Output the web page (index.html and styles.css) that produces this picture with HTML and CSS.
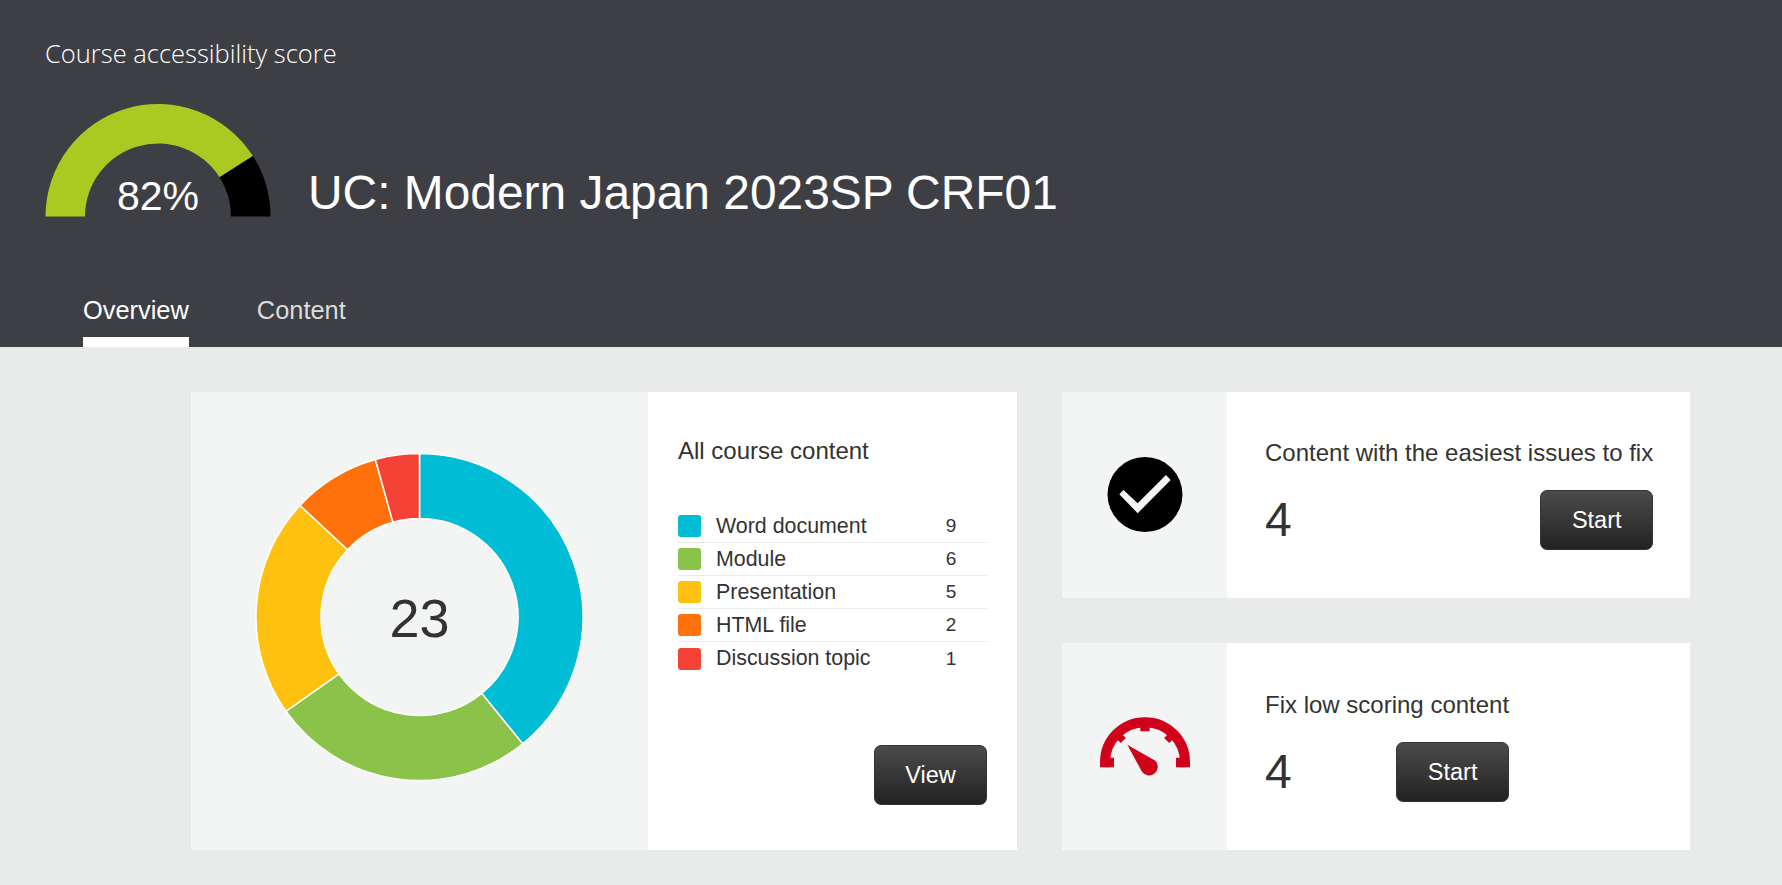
FILE: index.html
```html
<!DOCTYPE html>
<html lang="en">

<head>
    <meta charset="UTF-8">
    <meta name="viewport" content="width=device-width, initial-scale=1.0">
    <title>Course accessibility score</title>
    <link rel="stylesheet" href="styles.css">
</head>

<body>

    <header class="course-header">
        <div class="score-label">Course accessibility score</div>
        <div class="score-row">
            <div class="score-gauge">
                <svg viewBox="0 0 226 114" width="226" height="114">
                    <path fill="#abc921" d="M.5 113.5A112.5 112.5 0 0 1 207.9 53.1L174.6 74.3A73 73 0 0 0 40 113.5Z"/>
                    <path fill="#000" d="M207.9 53.1A112.5 112.5 0 0 1 225.5 113.5H186A73 73 0 0 0 174.6 74.3Z"/>
                </svg>
                <span class="score-value">82%</span>
            </div>
            <h1 class="course-name">UC: Modern Japan 2023SP CRF01</h1>
        </div>
        <nav class="tabs">
            <a class="tab active" href="#">Overview</a>
            <a class="tab" href="#">Content</a>
        </nav>
    </header>

    <main class="dashboard">
        <section class="card content-card">
            <div class="chart-side">
                <svg class="donut" viewBox="-165.5 -165 331 330" width="331" height="330">
                    <path fill="#00bcd4" d="M0 -163.5A163.5 163.5 0 0 1 103.2 126.8L62.2 76.4A98.5 98.5 0 0 0 0 -98.5Z"/>
                    <path fill="#8bc34a" d="M103.2 126.8A163.5 163.5 0 0 1 -133.6 94.3L-80.5 56.8A98.5 98.5 0 0 0 62.2 76.4Z"/>
                    <path fill="#ffc110" d="M-133.6 94.3A163.5 163.5 0 0 1 -119.5 -111.6L-71.9 -67.3A98.5 98.5 0 0 0 -80.5 56.8Z"/>
                    <path fill="#ff710b" d="M-119.5 -111.6A163.5 163.5 0 0 1 -44.1 -157.5L-26.6 -94.8A98.5 98.5 0 0 0 -71.9 -67.3Z"/>
                    <path fill="#f44336" d="M-44.1 -157.5A163.5 163.5 0 0 1 0 -163.5V-98.5A98.5 98.5 0 0 0 -26.6 -94.8Z"/>
                    <text class="donut-total" x="0" y="20" text-anchor="middle">23</text>
                </svg>
            </div>
            <div class="legend-side">
                <h2 class="card-title">All course content</h2>
                <ul class="legend">
                    <li class="legend-row"><span class="swatch swatch-word"></span><span class="legend-name">Word document</span><span class="legend-count">9</span></li>
                    <li class="legend-row"><span class="swatch swatch-module"></span><span class="legend-name">Module</span><span class="legend-count">6</span></li>
                    <li class="legend-row"><span class="swatch swatch-slides"></span><span class="legend-name">Presentation</span><span class="legend-count">5</span></li>
                    <li class="legend-row"><span class="swatch swatch-html"></span><span class="legend-name">HTML file</span><span class="legend-count">2</span></li>
                    <li class="legend-row"><span class="swatch swatch-topic"></span><span class="legend-name">Discussion topic</span><span class="legend-count">1</span></li>
                </ul>
                <button class="btn view-btn" type="button">View</button>
            </div>
        </section>

        <div class="side-column">
            <section class="card task-card">
                <div class="task-icon">
                    <svg viewBox="0 0 130 110" width="130" height="110">
                        <circle cx="65" cy="54.5" r="37.5" fill="#000"/>
                        <path fill="#f3f5f4" d="M39.3 54.3L43.5 50L57.7 63.3L86 35L90.7 40L57.7 73.3Z"/>
                    </svg>
                </div>
                <div class="task-body">
                    <div class="task-inner">
                        <h2 class="card-title">Content with the easiest issues to fix</h2>
                        <div class="task-action">
                            <span class="task-count">4</span>
                            <button class="btn" type="button">Start</button>
                        </div>
                    </div>
                </div>
            </section>

            <section class="card task-card">
                <div class="task-icon">
                    <svg viewBox="0 4.5 390 270" width="130" height="90">
                        <path fill="none" stroke="#d0021b" stroke-width="30" d="M75 200V185A120 120 0 0 1 315 185V200"/>
                        <path fill="none" stroke="#d0021b" stroke-width="28" d="M75 186H102M288 186H315M195 70V92"/>
                        <path fill="none" stroke="#d0021b" stroke-width="22" d="M112 102L130 120M278 102L260 120"/>
                        <path fill="#d0021b" d="M142 133L226 181A26 26 0 1 1 186 214Z"/>
                    </svg>
                </div>
                <div class="task-body">
                    <div class="task-inner">
                        <h2 class="card-title">Fix low scoring content</h2>
                        <div class="task-action">
                            <span class="task-count">4</span>
                            <button class="btn" type="button">Start</button>
                        </div>
                    </div>
                </div>
            </section>
        </div>
    </main>

</body>

</html>
```

FILE: styles.css
```css
* {
    box-sizing: border-box;
}

body {
    margin: 0;
    font-family: "Liberation Sans", Arial, sans-serif;
    color: #333;
    background-color: #e9ebea;
}

.course-header {
    display: flex;
    flex-direction: column;
    height: 347px;
    padding: 37px 0 0 45px;
    background-color: #3e3f44;
    color: white;
}

.score-label {
    font-family: "Open Sans", sans-serif;
    font-weight: 300;
    font-size: 25.5px;
    line-height: 33px;
}

.score-row {
    display: flex;
    align-items: flex-start;
    margin-top: 33px;
}

.score-gauge {
    position: relative;
    width: 226px;
    height: 114px;
}

.score-gauge svg {
    display: block;
}

.score-value {
    position: absolute;
    left: 0;
    right: 0;
    bottom: -3px;
    font-size: 41px;
    line-height: 48px;
    text-align: center;
}

.course-name {
    margin: 60px 0 0 37px;
    font-size: 47.9px;
    font-weight: normal;
    line-height: 60px;
}

.tabs {
    display: flex;
    gap: 68px;
    margin: auto 0 0 38px;
}

.tab {
    height: 50px;
    font-size: 25.4px;
    line-height: 26px;
    color: #dcdcdc;
    text-decoration: none;
}

.tab.active {
    color: white;
    border-bottom: 10px solid white;
}

.dashboard {
    display: flex;
    gap: 45px;
    padding: 45px 92px 35px 191px;
}

.card {
    display: flex;
    background-color: white;
}

.content-card {
    width: 826px;
    height: 458px;
}

.chart-side {
    display: flex;
    justify-content: center;
    align-items: center;
    width: 457px;
    padding-bottom: 8px;
    background-color: #f3f5f4;
}

.donut path {
    stroke: white;
    stroke-width: 1.5;
}

.donut-total {
    font-size: 54px;
    fill: #333;
}

.legend-side {
    display: flex;
    flex-direction: column;
    flex: 1;
    padding: 44px 30px 45px;
}

.card-title {
    margin: 0;
    font-size: 24px;
    font-weight: normal;
    line-height: 30px;
}

.legend {
    margin: 44px 0 0;
    padding: 0;
    list-style: none;
}

.legend-row {
    display: flex;
    align-items: center;
    height: 33px;
    font-size: 21.4px;
    border-bottom: 1px solid #e9ebea;
}

.legend-row:last-child {
    border-bottom: none;
}

.swatch {
    width: 23px;
    height: 22px;
    margin-right: 15px;
    border-radius: 3px;
}

.swatch-word {
    background-color: #00bcd4;
}

.swatch-module {
    background-color: #8bc34a;
}

.swatch-slides {
    background-color: #ffc110;
}

.swatch-html {
    background-color: #ff710b;
}

.swatch-topic {
    background-color: #f44336;
}

.legend-name {
    flex: 1;
}

.legend-count {
    width: 42px;
    margin-right: 15px;
    font-size: 19px;
    text-align: center;
}

.btn {
    width: 113px;
    height: 60px;
    padding: 0;
    font-family: inherit;
    font-size: 23.5px;
    color: white;
    background: linear-gradient(#4b4b4b, #222);
    border: 1px solid #333;
    border-radius: 7px;
    cursor: pointer;
}

.view-btn {
    align-self: flex-end;
    margin-top: auto;
}

.side-column {
    display: flex;
    flex-direction: column;
    flex: 1;
    gap: 45px;
}

.task-card {
    height: 206px;
}

.task-card + .task-card {
    height: 207px;
}

.task-icon {
    display: flex;
    justify-content: center;
    align-items: center;
    width: 165px;
    background-color: #f3f5f4;
}

.task-body {
    flex: 1;
    padding: 46px 0 0 38px;
}

.task-card + .task-card .task-body {
    padding-top: 47px;
}

.task-inner {
    display: inline-block;
}

.task-action {
    display: flex;
    justify-content: space-between;
    align-items: center;
    margin-top: 22px;
}

.task-count {
    margin-bottom: 2px;
    font-size: 48px;
}
```
